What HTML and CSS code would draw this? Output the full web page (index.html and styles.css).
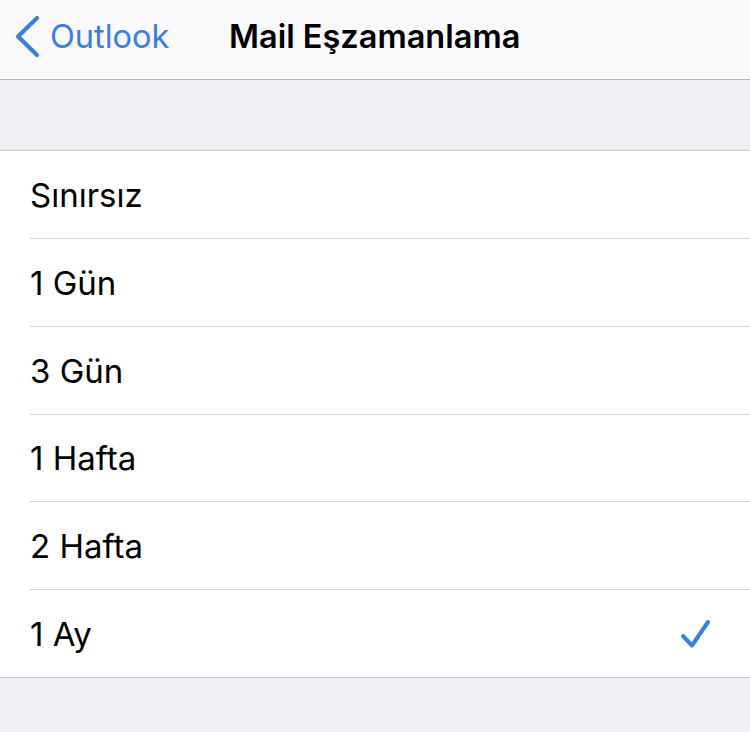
FILE: index.html
```html
<!DOCTYPE html>
<html lang="tr">
<head>
<meta charset="UTF-8">
<meta name="viewport" content="width=device-width, initial-scale=1.0">
<title>Mail Eşzamanlama</title>
<link rel="stylesheet" href="styles.css">
</head>
<body>
<header class="navbar">
  <a class="back" href="#">
    <svg class="chevron" width="30" height="44" viewBox="0 0 30 44">
      <polyline points="22,3 3,21.5 22,40" fill="none" stroke="#3a7ee4" stroke-width="4.2" stroke-linecap="round" stroke-linejoin="round"/>
    </svg>
    <span>Outlook</span>
  </a>
  <h1 class="title">Mail Eşzamanlama</h1>
</header>

<div class="spacer"></div>

<ul class="options">
  <li class="option"><span>Sınırsız</span></li>
  <li class="option"><span>1 Gün</span></li>
  <li class="option"><span>3 Gün</span></li>
  <li class="option"><span>1 Hafta</span></li>
  <li class="option"><span>2 Hafta</span></li>
  <li class="option selected">
    <span>1 Ay</span>
    <svg class="check" width="34" height="34" viewBox="0 0 34 34">
      <polyline points="4,19 13,28.5 29,5" fill="none" stroke="#3a7ee4" stroke-width="4" stroke-linecap="round" stroke-linejoin="round"/>
    </svg>
  </li>
</ul>
</body>
</html>
```

FILE: styles.css
```css
/* iOS style settings list */
body {
  margin: 0;
  background-color: #efeff4;
  font-family: Inter, "Noto Sans", sans-serif;
  color: #000;
}
.navbar {
  height: 80px;
  background-color: #f9f9fb;
  border-bottom: 1px solid #b4b4b6;
  box-sizing: border-box;
  display: flex;
  align-items: center;
  padding-bottom: 6px;
}
.back {
  display: flex;
  align-items: center;
  color: #3a7ee4;
  text-decoration: none;
  font-size: 32.5px;
  padding-left: 15px;
  width: 214px;
}
.chevron {
  margin-right: 5px;
}
.title {
  margin: 0;
  font-size: 32.5px;
  font-weight: 600;
}
.spacer {
  height: 70px;
}
.options {
  list-style: none;
  margin: 0;
  padding: 0 0 0 30px;
  background-color: #fff;
  border-top: 1px solid #c8c7cc;
  border-bottom: 1px solid #c8c7cc;
}
.option {
  height: 88px;
  display: flex;
  align-items: center;
  justify-content: space-between;
  padding-right: 37px;
  font-size: 33px;
  border-bottom: 1px solid #d0d0d4;
  box-sizing: border-box;
}
.option:nth-child(4),
.option:last-child {
  height: 87px;
}
.option:last-child {
  border-bottom: none;
}
```
